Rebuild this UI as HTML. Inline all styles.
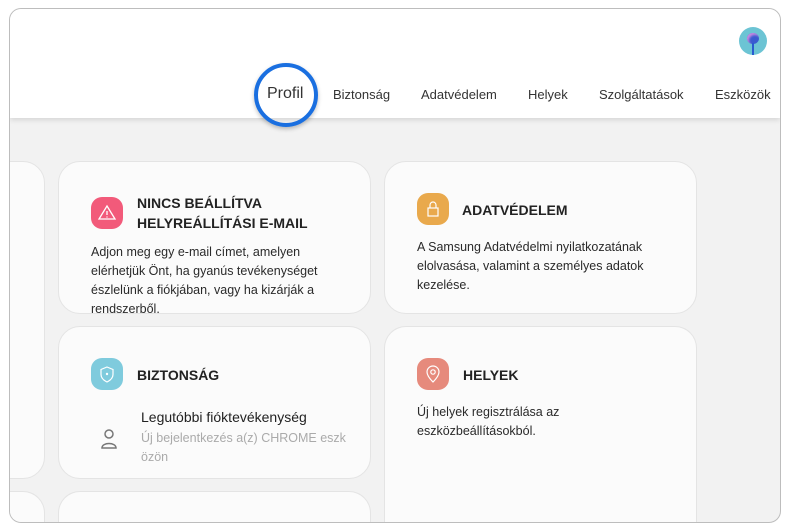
<!DOCTYPE html>
<html><head><meta charset="utf-8"><style>
*{margin:0;padding:0;box-sizing:border-box}
html,body{width:800px;height:530px;overflow:hidden}
body{background:#fff;font-family:"Liberation Sans",sans-serif;position:relative;color:#222}
#frame{position:absolute;left:9px;top:8px;width:772px;height:515px;border:1px solid #bdbdbd;border-radius:12px;overflow:hidden;background:#f2f2f2}
#hdr{position:absolute;left:0;top:0;width:100%;height:109px;background:#fff;box-shadow:0 2px 5px rgba(0,0,0,.12);z-index:2}
.nav{position:absolute;top:78px;font-size:13px;color:#333}
.card{position:absolute;background:#fbfbfb;border:1px solid #e4e4e4;border-radius:22px}
.cut{border-bottom:none;border-bottom-left-radius:0;border-bottom-right-radius:0}
.ic{position:absolute;width:32px;height:32px;border-radius:11px}
.t{position:absolute;font-size:14px;font-weight:bold;line-height:20px;color:#222}
.b{position:absolute;font-size:12.5px;line-height:19px;color:#2a2a2a}
</style></head><body>
<div id="frame">
<div id="hdr">
<div style="position:absolute;left:729px;top:18px;width:28px;height:28px;border-radius:50%;background:#6cc4d4"><div style="position:absolute;left:8px;top:6px;width:12px;height:11px;border-radius:50%;background:#3a5bd0;box-shadow:inset 2px 2px 2px #c78ae0"></div><div style="position:absolute;left:13px;top:16px;width:1.5px;height:12px;background:#2a5bd0"></div></div>
<div class="nav" style="left:257px;top:76px;font-size:16px">Profil</div>
<div class="nav" style="left:323px">Biztonság</div>
<div class="nav" style="left:411px">Adatvédelem</div>
<div class="nav" style="left:518px">Helyek</div>
<div class="nav" style="left:589px">Szolgáltatások</div>
<div class="nav" style="left:705px">Eszközök</div>
</div>
<div style="position:absolute;left:244px;top:54px;width:64px;height:64px;border:4px solid #1a6fe0;border-radius:50%;z-index:3;box-shadow:0 2px 4px rgba(0,0,0,.25)"></div>
<div class="card" style="left:-30px;top:152px;width:65px;height:318px"></div>
<div class="card cut" style="left:-30px;top:482px;width:65px;height:31px"></div>
<div class="card" style="left:48px;top:152px;width:313px;height:153px;overflow:hidden">
<div class="ic" style="left:32px;top:35px;background:#f25a7a"><svg width="32" height="32"><path d="M16 9L24 22H8Z" fill="none" stroke="#fff" stroke-width="1.3"/><path d="M16 14v4M16 19.5v1" stroke="#fff" stroke-width="1.3"/></svg></div>
<div class="t" style="left:78px;top:31px">NINCS BEÁLLÍTVA<br>HELYREÁLLÍTÁSI E-MAIL</div>
<div class="b" style="left:32px;top:81px">Adjon meg egy e-mail címet, amelyen<br>elérhetjük Önt, ha gyanús tevékenységet<br>észlelünk a fiókjában, vagy ha kizárják a<br>rendszerből.</div>
</div>
<div class="card" style="left:374px;top:152px;width:313px;height:153px">
<div class="ic" style="left:32px;top:31px;background:#e9a94c"><svg width="32" height="32"><rect x="11" y="15" width="10" height="8" fill="none" stroke="#fff" stroke-width="1.2"/><path d="M13 15v-3a3 3 0 0 1 6 0v3" fill="none" stroke="#fff" stroke-width="1.2"/></svg></div>
<div class="t" style="left:77px;top:38px">ADATVÉDELEM</div>
<div class="b" style="left:32px;top:76px">A Samsung Adatvédelmi nyilatkozatának<br>elolvasása, valamint a személyes adatok<br>kezelése.</div>
</div>
<div class="card" style="left:48px;top:317px;width:313px;height:153px">
<div class="ic" style="left:32px;top:31px;background:#7fcbdd"><svg width="32" height="32"><path d="M16 9l6 2.5v5c0 4-3 6-6 7.5c-3-1.5-6-3.5-6-7.5v-5Z" fill="none" stroke="#fff" stroke-width="1.2"/><circle cx="16" cy="16" r="1.2" fill="#fff"/></svg></div>
<div class="t" style="left:78px;top:38px">BIZTONSÁG</div>
<svg style="position:absolute;left:40px;top:100px" width="20" height="24"><circle cx="10" cy="7" r="4" fill="none" stroke="#777" stroke-width="1.5"/><path d="M3 21c0-6 14-6 14 0Z" fill="none" stroke="#777" stroke-width="1.5"/></svg>
<div style="position:absolute;left:82px;top:82px;font-size:14px;color:#222">Legutóbbi fióktevékenység</div>
<div class="b" style="left:82px;top:102px;color:#aaa">Új bejelentkezés a(z) CHROME eszk<br>özön</div>
</div>
<div class="card cut" style="left:374px;top:317px;width:313px;height:196px">
<div class="ic" style="left:32px;top:31px;background:#e68a7c"><svg width="32" height="32"><path d="M16 24c-4-4-6-7-6-10a6 6 0 0 1 12 0c0 3-2 6-6 10Z" fill="none" stroke="#fff" stroke-width="1.2"/><circle cx="16" cy="14" r="2.2" fill="none" stroke="#fff" stroke-width="1.2"/></svg></div>
<div class="t" style="left:78px;top:38px">HELYEK</div>
<div class="b" style="left:32px;top:76px">Új helyek regisztrálása az<br>eszközbeállításokból.</div>
</div>
<div class="card cut" style="left:48px;top:482px;width:313px;height:31px"></div>
</div>
</body></html>
